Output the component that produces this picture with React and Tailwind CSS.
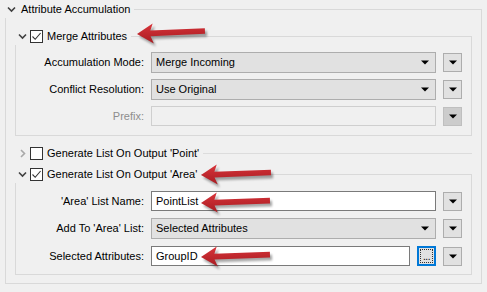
import React from 'react';

// small black drop-down triangle used in combos and side buttons
const Tri = ({ className = '' }) => (
  <svg width="8" height="5" viewBox="0 0 8 5" className={className}>
    <path d="M0 0.5 H8 L4 4.5 Z" fill="#000" />
  </svg>
);

const Chevron = ({ open = true, dim = false }) => (
  <svg width="9" height="9" viewBox="0 0 9 9" className="shrink-0">
    {open ? (
      <path d="M1 2.5 L4.5 6 L8 2.5" fill="none" stroke={dim ? '#a0a0a0' : '#404040'} strokeWidth="1.6" />
    ) : (
      <path d="M3 1 L6.5 4.5 L3 8" fill="none" stroke="#a8a8a8" strokeWidth="1.6" />
    )}
  </svg>
);

const CheckBox = ({ checked }) => (
  <div className="w-[13px] h-[13px] shrink-0 border border-[#333333] bg-white flex items-center justify-center">
    {checked && (
      <svg width="11" height="11" viewBox="0 0 11 11">
        <path d="M1.5 5.5 L4.2 8.3 L9.6 2" fill="none" stroke="#333333" strokeWidth="1.1" />
      </svg>
    )}
  </div>
);

const SideButton = ({ disabled }) => (
  <div
    className={
      'w-[19px] h-[19px] self-center flex items-center justify-center border ' +
      (disabled ? 'bg-[#cccccc] border-[#bfbfbf]' : 'bg-[#e1e1e1] border-[#adadad]')
    }
  >
    <Tri />
  </div>
);

const Combo = ({ value }) => (
  <div className="h-[21px] flex items-center justify-between bg-[#e1e1e1] border border-[#adadad] pl-[4px] pr-[6px]">
    <span>{value}</span>
    <Tri />
  </div>
);

const TextField = ({ value, className = '' }) => (
  <div className={'h-[20px] flex items-center bg-white border border-[#7a7a7a] pl-[4px] ' + className}>
    {value}
  </div>
);

const Label = ({ children, dim }) => (
  <div className={'text-right self-center ' + (dim ? 'text-[#8d8d8d]' : 'text-black')}>{children}</div>
);

// header of a collapsible group: chevron, checkbox, title and the top line of the frame
const GroupHeader = ({ open, checked, title, boxed = true }) => (
  <div className="h-[18px] flex items-center">
    <div className="ml-[3px] w-[9px] flex justify-center">
      <Chevron open={open} />
    </div>
    <div className="ml-[3px]">
      <CheckBox checked={checked} />
    </div>
    <span className="ml-[4px] whitespace-nowrap">{title}</span>
    <div
      className={
        'ml-[4px] flex-1 self-end h-[9px] border-t ' +
        (boxed ? 'border-r border-[#d9d9d9]' : 'border-[#dcdcdc]')
      }
    />
  </div>
);

const Arrow = ({ x, y, len, rot = -2 }) => {
  const pts = `0,0 16,-10 13.5,-3 ${len},-3.5 ${len},2.2 13.5,2.8 16.5,10`;
  return (
    <g transform={`translate(${x} ${y}) rotate(${rot})`}>
      <polygon points={pts} fill="#000" opacity="0.35" transform="translate(2 3)" filter="url(#blur)" />
      <polygon points={pts} fill="url(#red)" />
    </g>
  );
};

export default function App() {
  return (
    <div className="relative w-[487px] h-[292px] bg-[#f0f0f0] font-['Liberation_Sans',Arial,sans-serif] text-[11px] text-black overflow-hidden">
      {/* outer group header */}
      <div className="w-[482px] h-[18px] flex items-center">
        <div className="ml-[6px] w-[10px] flex justify-center">
          <Chevron open />
        </div>
        <span className="ml-[5px] whitespace-nowrap">Attribute Accumulation</span>
        <div className="ml-[4px] flex-1 self-end h-[9px] border-t border-r border-[#d9d9d9]" />
      </div>

      {/* outer group body */}
      <div className="ml-[5px] w-[477px] border-l border-r border-b border-[#d9d9d9] pt-[9px] pb-[8px]">
        <div className="mx-[9px]">
          <GroupHeader open checked title="Merge Attributes" />
          <div className="border-l border-r border-b border-[#d9d9d9] pt-[7px] pb-[9px]">
            <div className="grid grid-cols-[128px_285px_19px] gap-x-[7px] gap-y-[6px]">
              <Label>Accumulation Mode:</Label>
              <Combo value="Merge Incoming" />
              <SideButton />

              <Label>Conflict Resolution:</Label>
              <Combo value="Use Original" />
              <SideButton />

              <Label dim>Prefix:</Label>
              <div className="h-[20px] bg-[#f0f0f0] border border-[#cfcfcf]" />
              <SideButton disabled />
            </div>
          </div>

          <div className="mt-[8px]">
            <GroupHeader open={false} checked={false} title="Generate List On Output 'Point'" boxed={false} />
          </div>

          <div className="mt-[3px]">
            <GroupHeader open checked title="Generate List On Output 'Area'" />
          </div>
          <div className="border-l border-r border-b border-[#d9d9d9] pt-[8px] pb-[8px]">
            <div className="grid grid-cols-[128px_285px_19px] gap-x-[7px] gap-y-[7px]">
              <Label>'Area' List Name:</Label>
              <TextField value="PointList" />
              <SideButton />

              <Label>Add To 'Area' List:</Label>
              <Combo value="Selected Attributes" />
              <SideButton />

              <Label>Selected Attributes:</Label>
              <div className="flex gap-[7px]">
                <TextField value="GroupID" className="flex-1" />
                <div className="w-[19px] h-[20px] border-2 border-[#0078d7] bg-[#e1e1e1] p-[1px]">
                  <div className="w-full h-full border border-dotted border-[#333333] flex items-end justify-center">
                    <span className="text-[10px] leading-[11px] tracking-[-0.5px]">...</span>
                  </div>
                </div>
              </div>
              <SideButton />
            </div>
          </div>
        </div>
      </div>

      {/* red annotation arrows */}
      <svg className="absolute inset-0 pointer-events-none" width="487" height="292">
        <defs>
          <linearGradient id="red" x1="0" y1="0" x2="0" y2="1">
            <stop offset="0" stopColor="#d8343a" />
            <stop offset="1" stopColor="#a81c22" />
          </linearGradient>
          <filter id="blur" x="-20%" y="-50%" width="140%" height="200%">
            <feGaussianBlur stdDeviation="1.2" />
          </filter>
        </defs>
        <Arrow x={137} y={34} len={68} rot={-2} />
        <Arrow x={201} y={175} len={70} rot={-1.5} />
        <Arrow x={201} y={203} len={69} rot={-1.5} />
        <Arrow x={201} y={257} len={69} rot={-1.5} />
      </svg>
    </div>
  );
}
